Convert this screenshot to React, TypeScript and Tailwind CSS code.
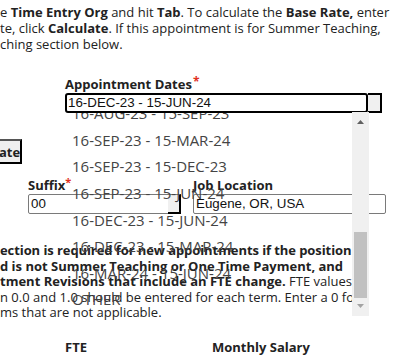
import React from "react";

const items = [
  "16-AUG-23 - 15-SEP-23",
  "16-SEP-23 - 15-MAR-24",
  "16-SEP-23 - 15-DEC-23",
  "16-SEP-23 - 15-JUN-24",
  "16-DEC-23 - 15-JUN-24",
  "16-DEC-23 - 15-MAR-24",
  "16-MAR-24 - 15-JUN-24",
  "OTHER",
];

export default function App() {
  return (
    <div className="relative w-[405px] h-[359px] overflow-hidden bg-white text-[#222] font-['Open_Sans',sans-serif] text-[13px] leading-[16px] whitespace-nowrap">
      <div className="pt-[4px]">
        <div>
          e <b>Time Entry Org</b> and hit <b>Tab</b>. To calculate the <b>Base Rate,</b> enter
        </div>
        <div>
          te, click <b>Calculate</b>. If this appointment is for Summer Teaching,
        </div>
        <div>ching section below.</div>
      </div>

      <div className="mt-[24px] pl-[65px]">
        <div className="font-bold">
          Appointment Dates<span className="text-[#e0301e] align-top text-[12px] leading-[12px] ml-[1px]">*</span>
        </div>
        <div className="mt-[1px] flex">
          <div className="relative z-20 w-[303px] h-[20px] border-2 border-black rounded-[3px] bg-white pl-[1px] flex items-center font-['Liberation_Sans',Arial,sans-serif] text-[13.33px] text-[#111]">
            16-DEC-23 - 15-JUN-24
          </div>
          <div className="relative z-20 w-[14px] h-[20px] border-2 border-l-0 border-black bg-[#f0f0f0]" />
        </div>
      </div>

      <div className="mt-[26px] w-[22px] h-[25px] bg-[#efefef] border-2 border-l-0 border-t-[#555] border-r-black border-b-black flex items-center font-bold text-[13px]">
        <span className="-ml-[1px]">ate</span>
      </div>

      <div className="mt-[13px] flex">
        <div className="ml-[28px] w-[153px]">
          <div className="font-bold">
            Suffix<span className="text-[#e0301e] align-top text-[11px] leading-[10px]">*</span>
          </div>
          <div className="mt-[1px] h-[20px] border border-[#7a7a7a] rounded-[2px] bg-white flex">
            <div className="flex-1 pl-[2px] flex items-center font-['Liberation_Sans',Arial,sans-serif] text-[13.33px] text-[#111]">
              00
            </div>
            <div className="w-[13px] -my-[1px] -mr-[1px] border-t border-t-[#7a7a7a] border-r-2 border-b-2 border-r-black border-b-black bg-[#f0f0f0]" />
          </div>
        </div>
        <div className="ml-[12px] w-[193px]">
          <div className="font-bold">Job Location</div>
          <div className="mt-[1px] h-[20px] border border-[#7a7a7a] rounded-[2px] bg-white pl-[2px] flex items-center font-['Liberation_Sans',Arial,sans-serif] text-[13.33px] text-[#111]">
            Eugene, OR, USA
          </div>
        </div>
      </div>

      <div className="mt-[29px] leading-[15.5px]">
        <div className="font-bold tracking-[-0.08px]">ection is required for new appointments if the position</div>
        <div className="font-bold">d is not Summer Teaching or One Time Payment, and</div>
        <div>
          <b>tment Revisions that include an FTE change.</b> FTE values
        </div>
        <div>n 0.0 and 1.0 should be entered for each term. Enter a 0 for</div>
        <div>ms that are not applicable.</div>
      </div>

      <div className="mt-[18px] flex font-bold">
        <div className="ml-[65px] w-[147px]">FTE</div>
        <div>Monthly Salary</div>
      </div>

      {/* open dropdown list (transparent) */}
      <div className="absolute z-10 left-[65px] top-[100px] w-[287px] pl-[7px] flex flex-col text-[15px] text-[#444]">
        {items.map((t) => (
          <div key={t} className="h-[26.6px] flex items-center">
            {t}
          </div>
        ))}
      </div>

      {/* scrollbar */}
      <div className="absolute z-30 left-[352px] top-[112px] w-[17px] h-[204px] bg-[#f0f0f0]">
        <svg className="absolute left-[4px] top-[7px]" width="9" height="6" viewBox="0 0 9 6">
          <path d="M4.5 1 L8 5 L1 5 Z" fill="#606060" />
        </svg>
        <div className="absolute left-[2px] top-[120px] w-[13px] h-[66px] bg-[#c1c1c1]" />
        <svg className="absolute left-[4px] top-[191px]" width="9" height="6" viewBox="0 0 9 6">
          <path d="M1 1 L8 1 L4.5 5 Z" fill="#a3a3a3" />
        </svg>
      </div>
    </div>
  );
}
